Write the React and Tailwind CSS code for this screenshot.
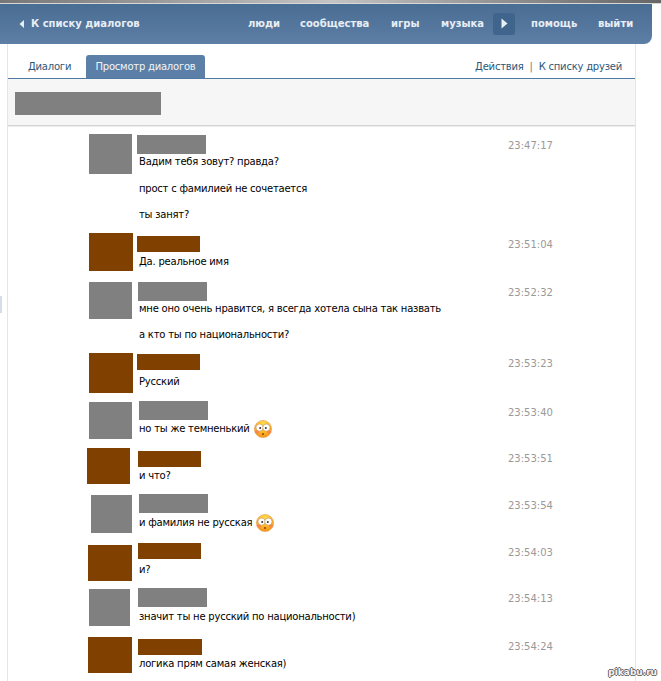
const rows = [
  { h: "h-[99px]", av: "ml-[81px] w-[43px] h-[40px] bg-[#808080]", nm: "ml-0 mt-px w-[69px] h-[19px] bg-[#808080]", tx: "mt-[1px]", tm: "mt-[5px]", gap: "mb-[12.5px]", lines: ["Вадим тебя зовут? правда?", "прост с фамилией не сочетается", "ты занят?"], t: "23:47:17" },
  { h: "h-[49px]", av: "ml-[81px] w-[44px] h-[38px] bg-[#804000]", nm: "ml-0 mt-[3px] w-[63px] h-[16px] bg-[#804000]", tx: "mt-[3px]", tm: "mt-[5px]", gap: "mb-[13px]", lines: ["Да. реальное имя"], t: "23:51:04" },
  { h: "h-[71px]", av: "ml-[81px] w-[43px] h-[37px] bg-[#808080]", nm: "ml-px w-[69px] h-[19px] bg-[#808080]", tx: "mt-px", tm: "mt-[4px]", gap: "mb-[12px]", lines: ["мне оно очень нравится, я всегда хотела сына так назвать", "а кто ты по национальности?"], t: "23:52:32" },
  { h: "h-[48px]", av: "ml-[81px] w-[44px] h-[40px] bg-[#804000]", nm: "ml-0 mt-px w-[63px] h-[16px] bg-[#804000]", tx: "mt-[5px]", tm: "mt-[4px]", gap: "mb-[13px]", lines: ["Русский"], t: "23:53:23" },
  { h: "h-[47px]", av: "ml-[81px] mt-px w-[43px] h-[37px] bg-[#808080]", nm: "ml-[2px] w-[69px] h-[19px] bg-[#808080]", tx: "mt-[2px]", tm: "mt-[5px]", gap: "mb-[13px]", lines: ["но ты же темненький"], smile: true, t: "23:53:40" },
  { h: "h-[46px]", av: "ml-[79px] w-[43px] h-[36px] bg-[#804000]", nm: "ml-px mt-[3px] w-[63px] h-[16px] bg-[#804000]", tx: "mt-[2px]", tm: "mt-[4px]", gap: "mb-[13px]", lines: ["и что?"], t: "23:53:51" },
  { h: "h-[49px]", av: "ml-[83px] mt-px w-[41px] h-[38px] bg-[#808080]", nm: "ml-[2px] w-[69px] h-[19px] bg-[#808080]", tx: "mt-[3px]", tm: "mt-[5px]", gap: "mb-[13px]", lines: ["и фамилия не русская"], smile: true, t: "23:53:54" },
  { h: "h-[45px]", av: "ml-[80px] mt-[2px] w-[44px] h-[36px] bg-[#804000]", nm: "ml-px w-[63px] h-[16px] bg-[#804000]", tx: "mt-[4px]", tm: "mt-[3px]", gap: "mb-[13px]", lines: ["и?"], t: "23:54:03" },
  { h: "h-[49px]", av: "ml-[81px] mt-px w-[41px] h-[37px] bg-[#808080]", nm: "ml-px w-[69px] h-[19px] bg-[#808080]", tx: "mt-[3px]", tm: "mt-[4px]", gap: "mb-[13px]", lines: ["значит ты не русский по национальности)"], t: "23:54:13" },
  { h: "h-[44px]", av: "ml-[80px] w-[44px] h-[36px] bg-[#804000]", nm: "ml-px mt-[2px] w-[64px] h-[16px] bg-[#804000]", tx: "mt-[2px]", tm: "mt-[3px]", gap: "mb-[13px]", lines: ["логика прям самая женская)"], t: "23:54:24" },
];

function Smile({ id }) {
  return (
    <svg width="18" height="18" viewBox="0 0 18 18" className="ml-[4px] shrink-0">
      <defs>
        <radialGradient id={id} cx="50%" cy="25%" r="80%">
          <stop offset="0%" stopColor="#ffe050" />
          <stop offset="60%" stopColor="#fdb428" />
          <stop offset="100%" stopColor="#f08a14" />
        </radialGradient>
      </defs>
      <circle cx="9" cy="9" r="8.6" fill={`url(#${id})`} stroke="#e09040" strokeWidth="0.5" />
      <ellipse cx="3" cy="12" rx="2.2" ry="1.7" fill="#f9864c" />
      <ellipse cx="15" cy="12" rx="2.2" ry="1.7" fill="#f9864c" />
      <circle cx="5.6" cy="7.6" r="3.6" fill="#fff" stroke="#b87830" strokeWidth="0.5" />
      <circle cx="12.4" cy="7.6" r="3.6" fill="#fff" stroke="#b87830" strokeWidth="0.5" />
      <circle cx="6.2" cy="8" r="1" fill="#333" />
      <circle cx="11.8" cy="8" r="1" fill="#333" />
      <ellipse cx="9" cy="14" rx="1.2" ry="0.9" fill="#a04a10" />
    </svg>
  );
}

export default function App() {
  return (
    <div className="relative h-[681px] w-[661px] overflow-hidden bg-white font-['DejaVu_Sans',sans-serif] text-[10px] tracking-[-0.22px] text-black">
      <div className="h-[4px] border-b border-[#d8d8d8] bg-gradient-to-r from-[#777777] via-[#c4c4c4] to-[#666666]" />
      <header className="flex h-[40px] w-[652px] items-center rounded-br-[8px] bg-gradient-to-b from-[#4a6d94] to-[#5d7ea5] pb-px pl-[19px] font-bold tracking-normal text-[#e8eef5]">
        <svg width="6" height="10" viewBox="0 0 6 10" className="mr-[6px]"><path d="M5 1v8L0.5 5z" fill="#e8eef5" /></svg>
        <span className="w-[217px]">К списку диалогов</span>
        <span className="w-[52px]">люди</span>
        <span className="w-[91px]">сообщества</span>
        <span className="w-[50px]">игры</span>
        <span className="w-[52px]">музыка</span>
        <span className="mr-[16px] flex h-[22px] w-[22px] items-center justify-center rounded-[3px] bg-[#40658c]">
          <svg width="7" height="11" viewBox="0 0 7 11"><path d="M0.5 0.5v10L6.5 5.5z" fill="#e8eef5" /></svg>
        </span>
        <span className="w-[67px]">помощь</span>
        <span>выйти</span>
      </header>
      <main className="ml-[7px] w-[629px] border-x border-[#e3e5ea]">
        <div className="flex h-[35px] items-end justify-between border-b border-[#4f78a3] pt-[11px]">
          <div className="flex h-[23px] items-center text-[#2b587a]">
            <span className="w-[78px] pl-[20px]">Диалоги</span>
            <span className="flex h-[23px] w-[119px] items-center justify-center rounded-t-[3px] bg-[#5b7fa6] text-[#f2f5f9]">Просмотр диалогов</span>
          </div>
          <div className="flex h-[23px] items-center pr-[13px] text-[#2b587a]">
            <span>Действия</span>
            <span className="mx-[6px] text-[#777777]">|</span>
            <span>К списку друзей</span>
          </div>
        </div>
        <div className="flex h-[47px] items-center border-b border-[#d4d4d4] bg-[#f6f6f6] pl-[7px] pt-[3px]">
          <div className="h-[23px] w-[146px] bg-[#808080]" />
        </div>
        <div className="h-px bg-[#ececec]" />
        <div className="pt-[7px]">
          {rows.map((r, i) => (
            <div key={r.t} className={`flex items-start ${r.h}`}>
              <div className="w-[129px] shrink-0"><div className={r.av} /></div>
              <div className="w-[371px] shrink-0">
                <div className={r.nm} />
                <div className={`pl-[2px] ${r.tx}`}>
                  {r.lines.map((l) => (
                    <div key={l} className={`flex h-[14px] items-center leading-[14px] ${r.gap}`}>
                      {l}{r.smile && <Smile id={`s${i}`} />}
                    </div>
                  ))}
                </div>
              </div>
              <div className={`leading-[14px] tracking-normal text-[#999999] ${r.tm}`}>{r.t}</div>
            </div>
          ))}
        </div>
      </main>
      <div className="absolute left-0 top-[296px] h-[17px] w-[2px] bg-[#d5dee8]" />
      <div className="absolute bottom-[3px] right-[4px] text-[9px] font-bold leading-[12px] tracking-normal text-[#f4f4f4] [text-shadow:1px_0_0_#666,-1px_0_0_#666,0_1px_0_#666,0_-1px_0_#666]">pikabu.ru</div>
    </div>
  );
}
